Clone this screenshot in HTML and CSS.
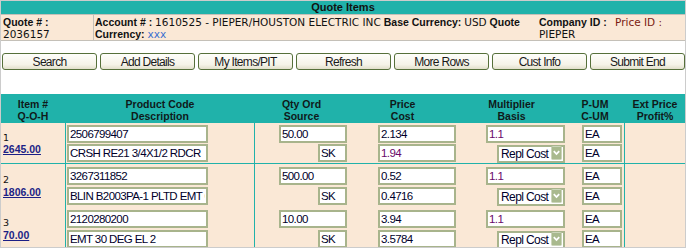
FILE: index.html
```html
<!DOCTYPE html>
<html>
<head>
	<meta charset="utf-8">
	<title>Quote Items</title>
	<link rel="stylesheet" href="styles.css">
</head>
<body>
	<div id="frame">
		<div class="title">Quote Items</div>
		<div class="info">
			<div class="cell quote"><b>Quote # :</b> <span class="val">2036157</span></div>
			<div class="cell"><b>Account # :</b> <span class="val">1610525 - PIEPER/HOUSTON ELECTRIC INC</span> <b>Base Currency:</b> <span class="val">USD</span> <b>Quote Currency:</b> <span class="val cur">xxx</span></div>
			<div class="cell"><b>Company ID :</b> <span class="val">PIEPER</span></div>
			<div class="cell"><span class="val pid">Price ID :</span></div>
		</div>
		<div class="buttons">
			<button>Search</button>
			<button>Add Details</button>
			<button>My Items/PIT</button>
			<button>Refresh</button>
			<button>More Rows</button>
			<button>Cust Info</button>
			<button>Submit End</button>
		</div>
		<div class="items">
			<div class="row head">
				<div>Item #<br>Q-O-H</div>
				<div class="line">Product Code<br>Description</div>
				<div class="line">Qty Ord<br>Source</div>
				<div>Price<br>Cost</div>
				<div>Multiplier<br>Basis</div>
				<div>P-UM<br>C-UM</div>
				<div class="line">Ext Price<br>Profit%</div>
			</div>

			<div class="row item first">
				<div class="num">1<br><a href="#">2645.00</a></div>
				<div class="line code"><input class="desc" value="2506799407"><input class="desc" value="CRSH RE21 3/4X1/2 RDCR"></div>
				<div class="line right"><input class="qty" value="50.00"><input class="src" value="SK"></div>
				<div class="right"><input class="price" value="2.134"><input class="price purple" value="1.94"></div>
				<div class="right"><input class="mult purple" value="1.1">
					<div class="sel"><select><option>Repl Cost</option></select><svg width="11" height="14" viewBox="0 0 11 14"><rect x="0.5" y="0.5" width="10" height="13" rx="1" fill="#a9b98e" stroke="#cbd5ba"/><path d="M2.8 5.2 L5.5 8 L8.2 5.2" fill="none" stroke="#fff" stroke-width="1.8"/></svg></div>
				</div>
				<div class="right um"><input class="unit" value="EA"><input class="unit" value="EA"></div>
				<div class="line"></div>
			</div>

			<div class="row item">
				<div class="num">2<br><a href="#">1806.00</a></div>
				<div class="line code"><input class="desc" value="3267311852"><input class="desc" value="BLIN B2003PA-1 PLTD EMT CPLG"></div>
				<div class="line right"><input class="qty" value="500.00"><input class="src" value="SK"></div>
				<div class="right"><input class="price" value="0.52"><input class="price" value="0.4716"></div>
				<div class="right"><input class="mult purple" value="1.1">
					<div class="sel"><select><option>Repl Cost</option></select><svg width="11" height="14" viewBox="0 0 11 14"><rect x="0.5" y="0.5" width="10" height="13" rx="1" fill="#a9b98e" stroke="#cbd5ba"/><path d="M2.8 5.2 L5.5 8 L8.2 5.2" fill="none" stroke="#fff" stroke-width="1.8"/></svg></div>
				</div>
				<div class="right um"><input class="unit" value="EA"><input class="unit" value="EA"></div>
				<div class="line"></div>
			</div>

			<div class="row item">
				<div class="num">3<br><a href="#">70.00</a></div>
				<div class="line code"><input class="desc" value="2120280200"><input class="desc" value="EMT 30 DEG EL 2"></div>
				<div class="line right"><input class="qty" value="10.00"><input class="src" value="SK"></div>
				<div class="right"><input class="price" value="3.94"><input class="price" value="3.5784"></div>
				<div class="right"><input class="mult purple" value="1.1">
					<div class="sel"><select><option>Repl Cost</option></select><svg width="11" height="14" viewBox="0 0 11 14"><rect x="0.5" y="0.5" width="10" height="13" rx="1" fill="#a9b98e" stroke="#cbd5ba"/><path d="M2.8 5.2 L5.5 8 L8.2 5.2" fill="none" stroke="#fff" stroke-width="1.8"/></svg></div>
				</div>
				<div class="right um"><input class="unit" value="EA"><input class="unit" value="EA"></div>
				<div class="line"></div>
			</div>
		</div>
	</div>
</body>
</html>
```

FILE: styles.css
```css
body {
	margin: 0;
	background: #fff;
}
#frame {
	width: 686px;
	height: 248px;
	box-sizing: border-box;
	border: 1px solid #cccccc;
	overflow: hidden;
	font-family: "Liberation Sans", Arial, sans-serif;
}
.title {
	height: 13px;
	line-height: 13px;
	background: #20b2aa;
	color: #111;
	font-size: 11px;
	font-weight: bold;
	text-align: center;
}
.info {
	display: grid;
	grid-template-columns: 93px 442px 75px 1fr;
	background: #fae8d6;
	border-top: 1px solid #c4c0b8;
	border-bottom: 1px solid #c4c0b8;
	font-size: 10.5px;
	line-height: 12px;
	color: #111;
}
.info .cell {
	padding: 1px 2px 0 2px;
}
.info .quote {
	border-right: 1px solid #c4c0b8;
}
.info .cell + .cell {
	padding-left: 1px;
}
.info .cell:nth-child(3) {
	padding-left: 3px;
}
.info .cell:last-child {
	padding-left: 4px;
}
.val {
	font-family: "DejaVu Sans", Verdana, sans-serif;
	font-weight: normal;
}
.cur {
	color: #3b6fd0;
}
.pid {
	color: #7a1a10;
}
.buttons {
	display: grid;
	grid-template-columns: repeat(7, 1fr);
	gap: 3px;
	margin: 12px 0 0 1px;
}
button {
	height: 17px;
	padding: 0;
	border: 1px solid #56703a;
	border-radius: 3px;
	background: linear-gradient(#fefefb, #f5f3e8 70%, #e2dfcc);
	color: #1a1a1a;
	font-family: "Liberation Sans", Arial, sans-serif;
	font-size: 12px;
	letter-spacing: -0.7px;
	cursor: pointer;
}
.items {
	margin-top: 24px;
	background: #fae8d6;
}
.row {
	display: grid;
	grid-template-columns: 64px 189px 94px 109px 109px 58px 61px;
}
.head {
	background: #20b2aa;
	color: #0f1a1a;
	font-size: 10.5px;
	font-weight: bold;
	line-height: 12px;
	text-align: center;
}
.head > div {
	padding: 4px 0 1px;
}
.line {
	border-left: 1px solid #20b2aa;
}
.item > div {
	display: flex;
	flex-direction: column;
	gap: 2px;
	padding: 3px 1px 2px 0;
}
.item.first {
	border-bottom: 1px solid #20b2aa;
}
.item.first > div {
	gap: 1px;
	padding-top: 2px;
	padding-bottom: 1px;
}
.item .num {
	justify-content: center;
	padding-left: 2px;
	font-family: "DejaVu Sans", Verdana, sans-serif;
	font-size: 9.5px;
	line-height: 11px;
	color: #111;
}
.num a {
	color: #1c1f86;
	font-family: "Liberation Sans", Arial, sans-serif;
	font-size: 10.5px;
	font-weight: bold;
}
.item .code {
	align-items: flex-start;
	padding-left: 1px;
}
.item .right {
	align-items: flex-end;
}
.item .um {
	padding-right: 2px;
}
input, select {
	box-sizing: border-box;
	height: 18px;
	margin: 0;
	padding: 0 1px;
	border: 2px solid #a8b48c;
	background: #fff;
	color: #00002a;
	font-family: "Liberation Sans", Arial, sans-serif;
	font-size: 11.5px;
	letter-spacing: -0.6px;
	outline: none;
}
.purple {
	color: #6a0a6a;
}
.desc {
	width: 141px;
}
.qty {
	width: 68px;
}
.src {
	width: 29px;
}
.price {
	width: 78px;
}
.mult {
	width: 79px;
}
.unit {
	width: 40px;
}
.sel {
	position: relative;
	width: 68px;
	height: 18px;
}
.sel select {
	width: 100%;
	height: 18px;
	padding-left: 2px;
	font-size: 12px;
	appearance: none;
	-webkit-appearance: none;
	border-radius: 0;
}
.sel svg {
	position: absolute;
	top: 2px;
	right: 3px;
}
```
